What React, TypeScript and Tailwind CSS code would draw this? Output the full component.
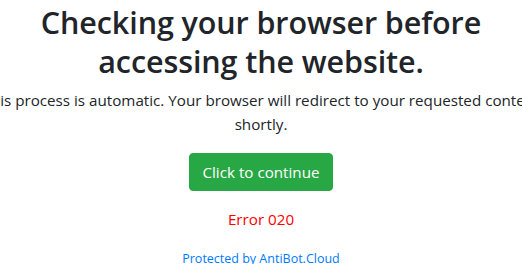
export default function App() {
  return (
    <div className="w-[522px] h-[264px] overflow-hidden bg-white font-['Open_Sans',sans-serif] text-[#212529] text-center">
      <h1 className="text-[30.5px] leading-[38.5px] font-semibold mb-2 pt-[3px] tracking-[-0.1px]">
        Checking your browser before accessing the website.
      </h1>
      <div className="flex justify-center">
        <p className="shrink-0 w-[600px] text-[15.2px] leading-6 mb-4">
          This process is automatic. Your browser will redirect to your requested content shortly.
        </p>
      </div>
      <div className="flex justify-center pt-px">
        <button className="bg-[#28a745] text-white text-[15.2px] leading-6 px-3 py-1.5 rounded border border-[#28a745]">
          Click to continue
        </button>
      </div>
      <p className="mt-4 text-[15.2px] leading-6 text-[#ff0000]">Error 020</p>
      <p className="mt-[18px] text-[12.5px] leading-5 text-[#007bff]">Protected by AntiBot.Cloud</p>
    </div>
  );
}
